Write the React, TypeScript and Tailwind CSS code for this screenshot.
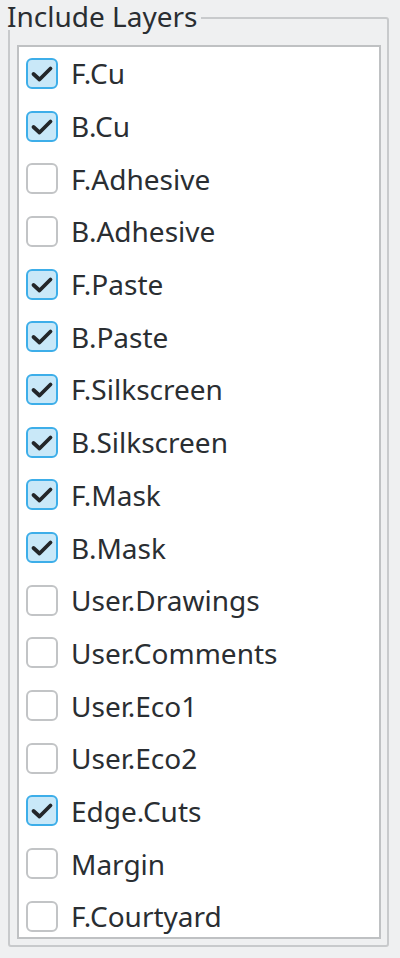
import React from 'react';

interface Layer {
  name:    string;
  checked: boolean;
}

const layers: Layer[] = [
  { name: 'F.Cu',          checked: true  },
  { name: 'B.Cu',          checked: true  },
  { name: 'F.Adhesive',    checked: false },
  { name: 'B.Adhesive',    checked: false },
  { name: 'F.Paste',       checked: true  },
  { name: 'B.Paste',       checked: true  },
  { name: 'F.Silkscreen',  checked: true  },
  { name: 'B.Silkscreen',  checked: true  },
  { name: 'F.Mask',        checked: true  },
  { name: 'B.Mask',        checked: true  },
  { name: 'User.Drawings', checked: false },
  { name: 'User.Comments', checked: false },
  { name: 'User.Eco1',     checked: false },
  { name: 'User.Eco2',     checked: false },
  { name: 'Edge.Cuts',     checked: true  },
  { name: 'Margin',        checked: false },
  { name: 'F.Courtyard',   checked: false },
];

const CheckBox = ({ checked }: { checked: boolean }) => (
  <div
    className={`w-[32px] h-[31px] flex-shrink-0 rounded-[6px] border-2 ${
      checked ? 'border-[#3daee9] bg-[#c9e8f8]' : 'border-[#c2c4c6] bg-white'
    }`}
  >
    {checked && (
      <svg viewBox="0 0 28 27" className="w-full h-full">
        <path
          d="M5.5 14 L11.5 19.5 L22.5 8.5"
          fill="none"
          stroke="#232629"
          strokeWidth={3.8}
          strokeLinecap="round"
          strokeLinejoin="round"
        />
      </svg>
    )}
  </div>
);

export default function App() {
  return (
    <div className="w-[400px] h-[958px] bg-[#eff0f1] pt-[17px] pl-[8px] font-['Noto_Sans',sans-serif] text-[#2a2e32]">
      {/* Group box */}
      <div className="relative w-[381px] h-[930px] border-2 border-[#c8cacc] rounded-[3px] pt-[26px] pl-[7px]">
        <span className="absolute -left-[10px] -top-[17px] bg-[#eff0f1] pl-[7px] pr-[3px] text-[28px] leading-[28px] whitespace-nowrap">
          Include Layers
        </span>

        {/* List */}
        <div className="w-[364px] h-[894px] border-2 border-[#bfc1c3] bg-white overflow-hidden">
          {layers.map((layer) => (
            <div key={layer.name} className="flex items-center h-[52.7px] pl-[7px] gap-[13px]">
              <CheckBox checked={layer.checked} />
              <span className="text-[28px] leading-none whitespace-nowrap">{layer.name}</span>
            </div>
          ))}
        </div>
      </div>
    </div>
  );
}
